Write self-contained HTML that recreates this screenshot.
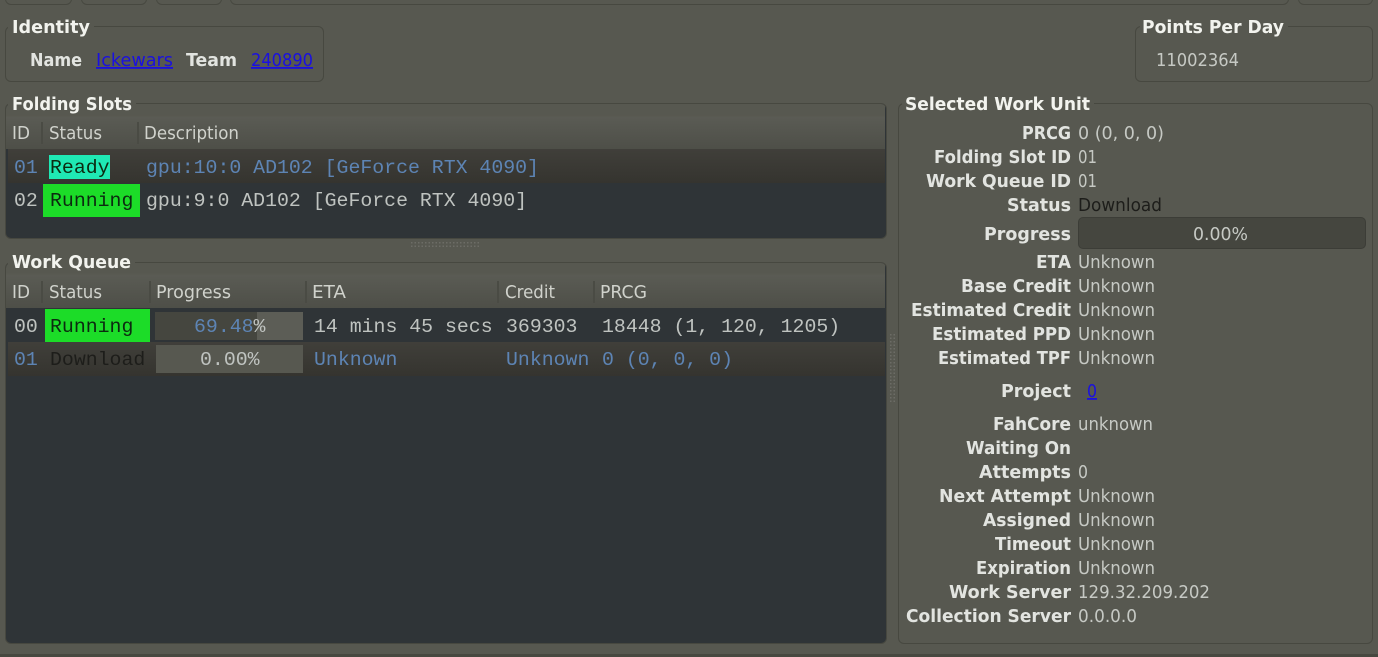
<!DOCTYPE html>
<html><head><meta charset="utf-8"><style>
html,body{margin:0;padding:0;background:#575850;width:1378px;height:657px;overflow:hidden}
.b{position:absolute;box-sizing:border-box}
.p{border:1.5px solid #474840;border-radius:6px}
svg{position:absolute;left:0;top:0;filter:blur(.3px)}
text{font-family:"DejaVu Sans",sans-serif;font-size:18px;fill:#d2d4ce}
.h{font-weight:bold;fill:#f2f3ee}
.l{font-weight:bold;fill:#e2e4e0}
.c{font-size:18px;fill:#d0d2cc}
.v{font-size:18px;fill:#c6c9c4}
.lnk{fill:#1a10e0;text-decoration:underline;font-size:18px}
.m{font-family:"Liberation Mono",monospace;font-size:19.85px;fill:#bfc3c0}
.mb{font-family:"Liberation Mono",monospace;font-size:19.85px;fill:#5d84b4}
.mk{font-family:"Liberation Mono",monospace;font-size:19.85px;fill:#0c2a10}
.dots{background-image:radial-gradient(#6c6d66 0.8px,transparent 1px);background-size:3.5px 3.5px}
</style></head><body>
<div class="b p" style="left:5px;top:-20px;width:67px;height:25px"></div>
<div class="b p" style="left:81px;top:-20px;width:66px;height:25px"></div>
<div class="b p" style="left:156px;top:-20px;width:66px;height:25px"></div>
<div class="b p" style="left:230px;top:-20px;width:1059px;height:25px"></div>
<div class="b p" style="left:1298px;top:-20px;width:75px;height:25px"></div>

<div class="b p" style="left:5px;top:26px;width:319px;height:56px"></div>
<div class="b p" style="left:1135px;top:26px;width:238px;height:56px"></div>
<div class="b p" style="left:898px;top:103px;width:475px;height:541px"></div>

<div class="b p" style="left:5px;top:103px;width:882px;height:136px;background:#2f3437;overflow:hidden">
  <div class="b" style="left:0;top:0;width:879px;height:45px;background:linear-gradient(#575850 0,#575850 25%,#5a5b54 30%,#4e4f48)"></div>
  <div class="b" style="left:2px;top:45px;width:877px;height:34px;background:linear-gradient(#403f3a,#35342f)"></div>
</div>
<div class="b p" style="left:5px;top:262px;width:882px;height:382px;background:#2f3437;overflow:hidden">
  <div class="b" style="left:0;top:0;width:879px;height:45px;background:linear-gradient(#575850 0,#575850 22%,#5a5b54 28%,#4e4f48)"></div>
  <div class="b" style="left:2px;top:79px;width:877px;height:34px;background:linear-gradient(#403f3a,#35342f)"></div>
</div>

<div class="b" style="left:41px;top:122px;width:2px;height:22px;background:#4a4b44"></div>
<div class="b" style="left:137px;top:122px;width:2px;height:22px;background:#4a4b44"></div>
<div class="b" style="left:41px;top:281px;width:2px;height:22px;background:#4a4b44"></div>
<div class="b" style="left:149px;top:281px;width:2px;height:22px;background:#4a4b44"></div>
<div class="b" style="left:305px;top:281px;width:2px;height:22px;background:#4a4b44"></div>
<div class="b" style="left:497px;top:281px;width:2px;height:22px;background:#4a4b44"></div>
<div class="b" style="left:593px;top:281px;width:2px;height:22px;background:#4a4b44"></div>

<div class="b" style="left:49px;top:155px;width:61px;height:24px;background:#1fe8b4"></div>
<div class="b" style="left:43px;top:184px;width:97px;height:33px;background:#1cdc28"></div>
<div class="b" style="left:45px;top:309px;width:105px;height:33px;background:#1cdc28"></div>
<div class="b" style="left:155px;top:312px;width:148px;height:28px;background:#5c5d56"></div>
<div class="b" style="left:155px;top:312px;width:102px;height:28px;background:#45463f"></div>
<div class="b" style="left:156px;top:345px;width:147px;height:28px;background:#575850"></div>
<div class="b" style="left:1078px;top:217px;width:288px;height:32px;background:#45463f;border:1.5px solid #3c3d37;border-radius:5px"></div>

<div class="b dots" style="left:410px;top:241px;width:70px;height:7px"></div>
<div class="b dots" style="left:889px;top:333px;width:7px;height:70px"></div>
<div class="b" style="left:0;top:654px;width:1378px;height:3px;background:#474840"></div>

<svg width="1378" height="657" xmlns="http://www.w3.org/2000/svg">
<rect x="8" y="18" width="86" height="14" fill="#575850"/>
<rect x="1140" y="18" width="148" height="14" fill="#575850"/>
<rect x="8" y="97" width="128" height="10" fill="#575850"/>
<rect x="902" y="97" width="192" height="10" fill="#575850"/>
<rect x="8" y="256" width="127" height="10" fill="#575850"/>

<text class="h" x="12" y="33" textLength="78" lengthAdjust="spacingAndGlyphs">Identity</text>
<text class="l" x="30" y="66" textLength="52" lengthAdjust="spacingAndGlyphs">Name</text>
<text class="lnk" x="96" y="66" textLength="77" lengthAdjust="spacingAndGlyphs">Ickewars</text>
<text class="l" x="186" y="66" textLength="51" lengthAdjust="spacingAndGlyphs">Team</text>
<text class="lnk" x="251" y="66" textLength="62" lengthAdjust="spacingAndGlyphs">240890</text>
<text class="h" x="1142" y="33" textLength="142" lengthAdjust="spacingAndGlyphs">Points Per Day</text>
<text class="v" x="1156" y="66" textLength="83" lengthAdjust="spacingAndGlyphs">11002364</text>

<text class="h" x="12" y="110" textLength="120" lengthAdjust="spacingAndGlyphs">Folding Slots</text>
<text class="c" x="12" y="139" textLength="18" lengthAdjust="spacingAndGlyphs">ID</text>
<text class="c" x="49" y="139" textLength="53" lengthAdjust="spacingAndGlyphs">Status</text>
<text class="c" x="144" y="139" textLength="95" lengthAdjust="spacingAndGlyphs">Description</text>

<text class="mb" x="14" y="173">01</text>
<text class="mk" x="50" y="173">Ready</text>
<text class="mb" x="146" y="173">gpu:10:0 AD102 [GeForce RTX 4090]</text>
<text class="m" x="14" y="206">02</text>
<text class="mk" x="50" y="206">Running</text>
<text class="m" x="146" y="206">gpu:9:0 AD102 [GeForce RTX 4090]</text>

<text class="h" x="12" y="268" textLength="119" lengthAdjust="spacingAndGlyphs">Work Queue</text>
<text class="c" x="12" y="298" textLength="18" lengthAdjust="spacingAndGlyphs">ID</text>
<text class="c" x="49" y="298" textLength="53" lengthAdjust="spacingAndGlyphs">Status</text>
<text class="c" x="156" y="298" textLength="75" lengthAdjust="spacingAndGlyphs">Progress</text>
<text class="c" x="312" y="298" textLength="34" lengthAdjust="spacingAndGlyphs">ETA</text>
<text class="c" x="505" y="298" textLength="50" lengthAdjust="spacingAndGlyphs">Credit</text>
<text class="c" x="600" y="298" textLength="47" lengthAdjust="spacingAndGlyphs">PRCG</text>

<text class="m" x="14" y="332">00</text>
<text class="mk" x="50" y="332">Running</text>
<text class="mb" x="194" y="332">69.48<tspan style="fill:#bfc3c0">%</tspan></text>
<text class="m" x="314" y="332">14 mins 45 secs</text>
<text class="m" x="506" y="332">369303</text>
<text class="m" x="602" y="332">18448 (1, 120, 1205)</text>

<text class="mb" x="14" y="365">01</text>
<text class="mk" x="50" y="365" style="fill:#1d1d1a">Download</text>
<text class="m" x="200" y="365">0.00%</text>
<text class="mb" x="314" y="365">Unknown</text>
<text class="mb" x="506" y="365">Unknown</text>
<text class="mb" x="602" y="365">0 (0, 0, 0)</text>

<text class="h" x="905" y="110" textLength="185" lengthAdjust="spacingAndGlyphs">Selected Work Unit</text>

<text class="l" x="1022" y="139" textLength="49" lengthAdjust="spacingAndGlyphs">PRCG</text>
<text class="l" x="934" y="163" textLength="137" lengthAdjust="spacingAndGlyphs">Folding Slot ID</text>
<text class="l" x="926" y="187" textLength="145" lengthAdjust="spacingAndGlyphs">Work Queue ID</text>
<text class="l" x="1007" y="211" textLength="64" lengthAdjust="spacingAndGlyphs">Status</text>
<text class="l" x="984" y="240" textLength="87" lengthAdjust="spacingAndGlyphs">Progress</text>
<text class="l" x="1036" y="268" textLength="35" lengthAdjust="spacingAndGlyphs">ETA</text>
<text class="l" x="961" y="292" textLength="110" lengthAdjust="spacingAndGlyphs">Base Credit</text>
<text class="l" x="911" y="316" textLength="160" lengthAdjust="spacingAndGlyphs">Estimated Credit</text>
<text class="l" x="932" y="340" textLength="139" lengthAdjust="spacingAndGlyphs">Estimated PPD</text>
<text class="l" x="938" y="364" textLength="133" lengthAdjust="spacingAndGlyphs">Estimated TPF</text>
<text class="l" x="1001" y="397" textLength="70" lengthAdjust="spacingAndGlyphs">Project</text>
<text class="l" x="993" y="430" textLength="78" lengthAdjust="spacingAndGlyphs">FahCore</text>
<text class="l" x="966" y="454" textLength="105" lengthAdjust="spacingAndGlyphs">Waiting On</text>
<text class="l" x="979" y="478" textLength="92" lengthAdjust="spacingAndGlyphs">Attempts</text>
<text class="l" x="939" y="502" textLength="132" lengthAdjust="spacingAndGlyphs">Next Attempt</text>
<text class="l" x="983" y="526" textLength="88" lengthAdjust="spacingAndGlyphs">Assigned</text>
<text class="l" x="995" y="550" textLength="76" lengthAdjust="spacingAndGlyphs">Timeout</text>
<text class="l" x="976" y="574" textLength="95" lengthAdjust="spacingAndGlyphs">Expiration</text>
<text class="l" x="949" y="598" textLength="122" lengthAdjust="spacingAndGlyphs">Work Server</text>
<text class="l" x="906" y="622" textLength="165" lengthAdjust="spacingAndGlyphs">Collection Server</text>

<text class="v" x="1078" y="139" textLength="86" lengthAdjust="spacingAndGlyphs">0 (0, 0, 0)</text>
<text class="v" x="1078" y="163" textLength="19" lengthAdjust="spacingAndGlyphs">01</text>
<text class="v" x="1078" y="187" textLength="19" lengthAdjust="spacingAndGlyphs">01</text>
<text class="v" x="1078" y="211" textLength="84" lengthAdjust="spacingAndGlyphs" style="fill:#1d1d1a">Download</text>
<text class="v" x="1193" y="240" textLength="55" lengthAdjust="spacingAndGlyphs">0.00%</text>
<text class="v" x="1078" y="268" textLength="77" lengthAdjust="spacingAndGlyphs">Unknown</text>
<text class="v" x="1078" y="292" textLength="77" lengthAdjust="spacingAndGlyphs">Unknown</text>
<text class="v" x="1078" y="316" textLength="77" lengthAdjust="spacingAndGlyphs">Unknown</text>
<text class="v" x="1078" y="340" textLength="77" lengthAdjust="spacingAndGlyphs">Unknown</text>
<text class="v" x="1078" y="364" textLength="77" lengthAdjust="spacingAndGlyphs">Unknown</text>
<text class="lnk" x="1087" y="397" textLength="10" lengthAdjust="spacingAndGlyphs">0</text>
<text class="v" x="1078" y="430" textLength="75" lengthAdjust="spacingAndGlyphs">unknown</text>
<text class="v" x="1078" y="478" textLength="10" lengthAdjust="spacingAndGlyphs">0</text>
<text class="v" x="1078" y="502" textLength="77" lengthAdjust="spacingAndGlyphs">Unknown</text>
<text class="v" x="1078" y="526" textLength="77" lengthAdjust="spacingAndGlyphs">Unknown</text>
<text class="v" x="1078" y="550" textLength="77" lengthAdjust="spacingAndGlyphs">Unknown</text>
<text class="v" x="1078" y="574" textLength="77" lengthAdjust="spacingAndGlyphs">Unknown</text>
<text class="v" x="1078" y="598" textLength="132" lengthAdjust="spacingAndGlyphs">129.32.209.202</text>
<text class="v" x="1078" y="622" textLength="59" lengthAdjust="spacingAndGlyphs">0.0.0.0</text>
</svg>
</body></html>
